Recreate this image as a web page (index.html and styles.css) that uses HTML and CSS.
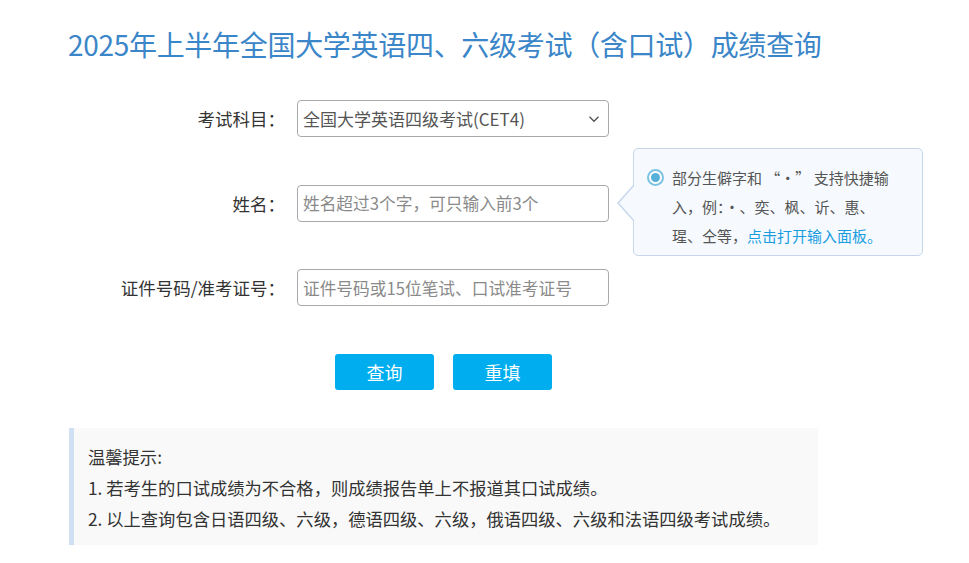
FILE: index.html
```html
<!DOCTYPE html>
<html lang="zh-CN">
<head>
<meta charset="utf-8">
<title>成绩查询</title>
<link rel="stylesheet" href="styles.css">
</head>
<body>
<div class="page">
  <h1 class="title">2025年上半年全国大学英语四、六级考试（含口试）成绩查询</h1>
  <div class="form">
    <div class="row">
      <label class="label">考试科目：</label>
      <div class="select">
        <span>全国大学英语四级考试(CET4)</span>
        <svg class="chev" width="12" height="8" viewBox="0 0 12 8"><path d="M1.5 1.8 L6 6.2 L10.5 1.8" fill="none" stroke="#555" stroke-width="1.4"/></svg>
      </div>
    </div>
    <div class="row name-row">
      <label class="label">姓名：</label>
      <input class="field" type="text" placeholder="姓名超过3个字，可只输入前3个">
      <div class="tip">
        <span class="arrow"></span>
        <span class="radio"></span>
        <p class="tip-text">部分生僻字和 “·” 支持快捷输<br>入，例：·、奕、枫、䜣、惠、<br>瑆、仝等，<a class="link">点击打开输入面板。</a></p>
      </div>
    </div>
    <div class="row">
      <label class="label">证件号码/准考证号：</label>
      <input class="field" type="text" placeholder="证件号码或15位笔试、口试准考证号">
    </div>
    <div class="buttons">
      <button class="btn">查询</button>
      <button class="btn">重填</button>
    </div>
  </div>
  <div class="notice">
    <p>温馨提示:</p>
    <p>1. 若考生的口试成绩为不合格，则成绩报告单上不报道其口试成绩。</p>
    <p>2. 以上查询包含日语四级、六级，德语四级、六级，俄语四级、六级和法语四级考试成绩。</p>
  </div>
</div>
</body>
</html>
```

FILE: styles.css
```css
* { box-sizing: border-box; }
body {
  margin: 0;
  background: #fff;
  font-family: "Microsoft YaHei", "Noto Sans CJK SC", "Liberation Sans", sans-serif;
  color: #333;
}
.page {
  padding: 24px 0 0 68px;
  width: 969px;
}
.title {
  margin: 0;
  font-size: 28px;
  font-weight: normal;
  line-height: 40px;
  color: #3a86c8;
  letter-spacing: -0.3px;
}
.form {
  margin-top: 36px;
  display: flex;
  flex-direction: column;
  gap: 47.5px;
}
.row {
  display: flex;
  align-items: center;
  height: 37px;
}
.name-row { position: relative; }
.label {
  width: 229px;
  padding-right: 12px;
  text-align: right;
  font-size: 17.5px;
  color: #333;
}
.select, .field {
  width: 312px;
  height: 37px;
  border: 1px solid #a9a9a9;
  border-radius: 4px;
  background: #fff;
  font-family: inherit;
  color: #555;
}
.select {
  display: flex;
  align-items: center;
  justify-content: space-between;
  padding: 0 8px 0 5px;
  font-size: 17px;
}
.chev { margin-top: 1px; }
.field {
  padding: 0 5px;
  outline: none;
  font-size: 16.7px;
}
.field::placeholder { color: #8a8a8a; }
.tip {
  position: absolute;
  left: 565px;
  top: -37px;
  width: 290px;
  height: 108px;
  border: 1px solid #c6d7ec;
  border-radius: 5px;
  background: #f6fafe;
  padding: 14px 10px 0 13px;
  display: flex;
  gap: 8px;
}
.arrow {
  position: absolute;
  left: -17px;
  top: 35px;
  width: 0;
  height: 0;
  border-top: 19px solid transparent;
  border-bottom: 19px solid transparent;
  border-right: 17px solid #c6d7ec;
}
.arrow::after {
  content: "";
  position: absolute;
  left: 2px;
  top: -18px;
  border-top: 18px solid transparent;
  border-bottom: 18px solid transparent;
  border-right: 16px solid #f6fafe;
}
.radio {
  flex: none;
  width: 17px;
  height: 17px;
  margin-top: 6px;
  border: 2px solid #7cc2e3;
  border-radius: 50%;
  background: #fff;
  position: relative;
}
.radio::after {
  content: "";
  position: absolute;
  left: 2px;
  top: 2px;
  width: 9px;
  height: 9px;
  border-radius: 50%;
  background: #56b0da;
}
.tip-text {
  margin: 0;
  font-size: 15px;
  line-height: 29px;
  color: #555;
}
.link { color: #1a9de0; cursor: pointer; }
.buttons {
  display: flex;
  gap: 19px;
  padding-left: 267px;
  margin-top: 0;
}
.btn {
  width: 99px;
  height: 36px;
  border: 0;
  border-radius: 3px;
  background: #00aeef;
  color: #fff;
  font-family: inherit;
  font-size: 18px;
  cursor: pointer;
}
.notice {
  margin-top: 38px;
  margin-left: 1px;
  width: 749px;
  height: 117px;
  background: #f9f9f9;
  border-left: 5px solid #cfe0f2;
  padding: 13px 0 0 14px;
}
.notice p {
  margin: 0;
  font-size: 17.3px;
  line-height: 31px;
  color: #333;
}
```
